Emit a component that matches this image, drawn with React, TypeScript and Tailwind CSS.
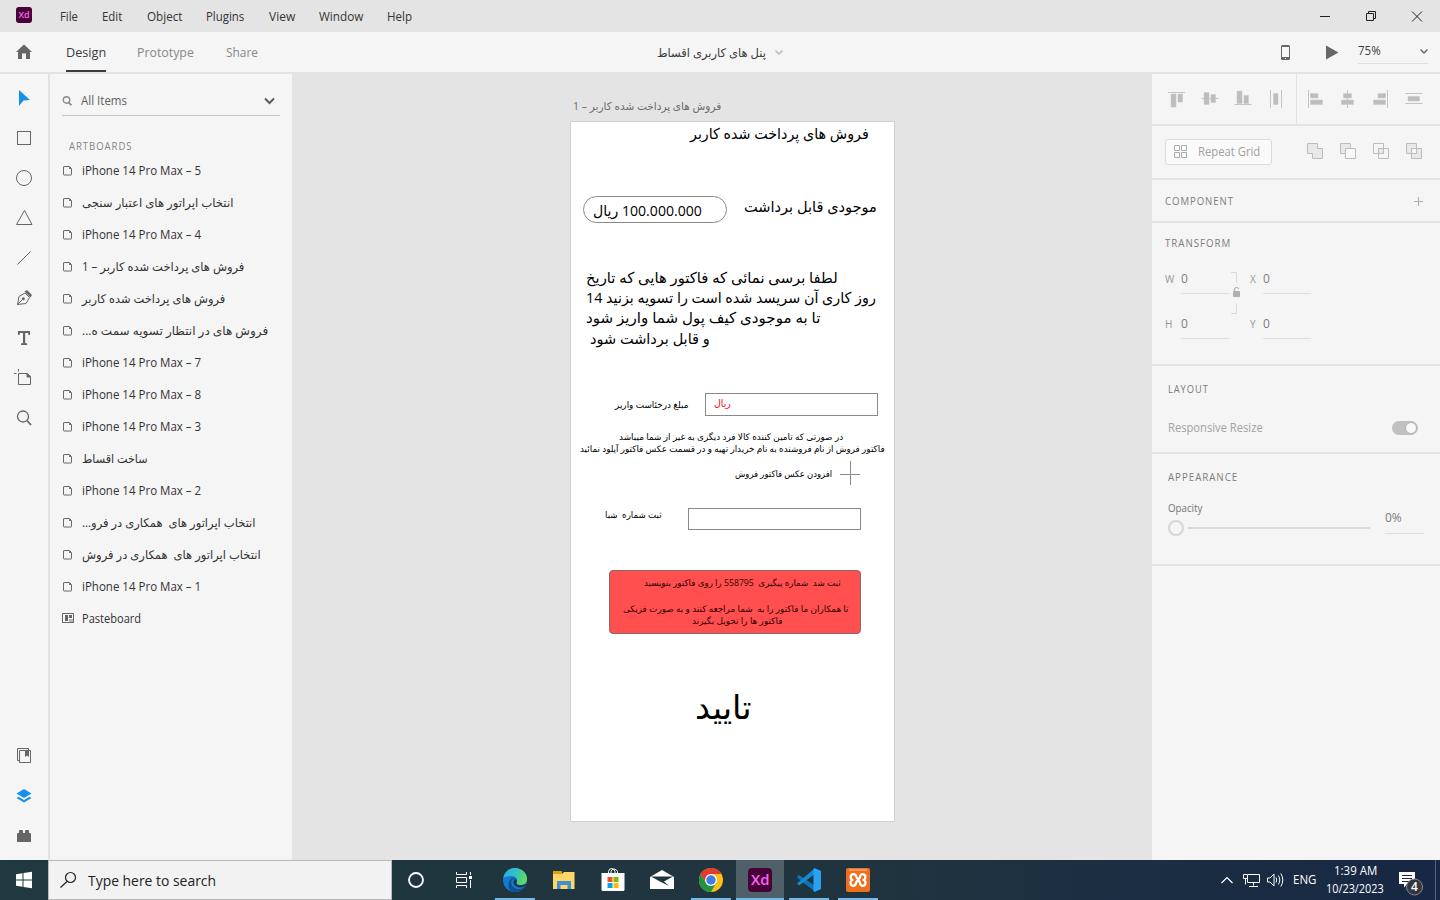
import { useLayoutEffect, useRef } from "react";
import type { ReactNode } from "react";

/* Single line of text stretched to the width of its box. */
function Fit({ className, dir = "ltr", children }: { className: string; dir?: "ltr" | "rtl"; children: ReactNode }) {
  const box = useRef<HTMLDivElement>(null);
  const line = useRef<HTMLSpanElement>(null);
  useLayoutEffect(() => {
    const fit = () => {
      if (!box.current || !line.current) return;
      const natural = line.current.offsetWidth;
      if (natural > 0) line.current.style.transform = `scaleX(${box.current.clientWidth / natural})`;
    };
    fit();
    document.fonts?.ready.then(fit);
  }, []);
  return (
    <div ref={box} className={`shrink-0 whitespace-pre ${className}`}>
      <span ref={line} dir={dir} className="inline-block origin-left">
        {children}
      </span>
    </div>
  );
}

function Svg({ w, h = w, className = "", children }: { w: number; h?: number; className?: string; children: ReactNode }) {
  return (
    <svg width={w} height={h} viewBox={`0 0 ${w} ${h}`} fill="none" className={`shrink-0 ${className}`}>
      {children}
    </svg>
  );
}

const menus = [
  ["File", "w-[18px] ml-[28px]"],
  ["Edit", "w-[20px] ml-[24px]"],
  ["Object", "w-[35px] ml-[25px]"],
  ["Plugins", "w-[38px] ml-[24px]"],
  ["View", "w-[26px] ml-[25px]"],
  ["Window", "w-[44px] ml-[24px]"],
  ["Help", "w-[25px] ml-[24px]"],
];

function TitleBar() {
  return (
    <header className="flex h-8 items-center bg-[#e4e4e4] text-[12px] leading-8 text-[#333]">
      <div className="mb-[2px] ml-4 flex h-4 w-4 items-center justify-center rounded-[3px] bg-[#470137] text-[9px] font-semibold leading-4 text-[#ff61f6]">
        <Fit className="w-[11px]">Xd</Fit>
      </div>
      {menus.map(([name, cls]) => (
        <Fit key={name} className={`${cls} pt-px`}>{name}</Fit>
      ))}
      <Svg w={120} h={32} className="ml-auto">
        <path d="M0 16.5H10" stroke="#222" />
        <path d="M46.500 13.500h7v7h-7zM48.500 13.500v-2h7v7h-2" stroke="#222" />
        <path d="M92 11.500l10 10M102 11.500l-10 10" stroke="#222" />
      </Svg>
    </header>
  );
}

function Toolbar() {
  return (
    <div className="flex h-[42px] items-start border-b-2 border-[#e3e3e3] bg-[#f5f5f5] leading-10 text-[#3c3c3c]">
      <Svg w={48} h={40}>
        <path d="M24 12.500l8 7.500h-2v7h-4v-5.500h-4v5.500h-4v-7h-2z" fill="#666" />
      </Svg>
      <div className="ml-[18px] h-10 border-b-2 border-[#3c3c3c] text-[13px]">
        <Fit className="w-[40px] leading-[41px]">Design</Fit>
      </div>
      <Fit className="ml-[31px] w-[57px] text-[13px] leading-[41px] text-[#888]">Prototype</Fit>
      <Fit className="ml-[32px] w-[32px] text-[13px] leading-[41px] text-[#888]">Share</Fit>
      <Fit dir="rtl" className="ml-[399px] w-[109px] text-[12px] leading-[42px]">پنل های کاربری اقساط</Fit>
      <Svg w={10} h={40} className="ml-2">
        <path d="M1.500 18.500l3.500 3.500 3.500-3.500" stroke="#b9b9b9" strokeWidth="1.500" />
      </Svg>
      <Svg w={60} h={40} className="ml-auto">
        <rect x="1" y="13" width="9" height="15" rx="1.500" fill="#666" />
        <rect x="2" y="15" width="7" height="10" fill="#f8f8f8" />
        <rect x="5" y="26" width="1" height="1" fill="#fff" />
        <path d="M46 13.500l12.500 7-12.500 7z" fill="#666" />
      </Svg>
      <div className="mr-3 ml-[18px] flex h-8 w-[70px] justify-between border-b border-[#dedede]">
        <Fit className="w-[23px] text-[12px] leading-[38px]">75%</Fit>
        <Svg w={8} h={40}>
          <path d="M0.500 17.500l3.500 3.500 3.500-3.500" stroke="#666" strokeWidth="1.500" />
        </Svg>
      </div>
    </div>
  );
}

const tools: ReactNode[] = [
  <path d="M7 4l11 10-6.500.5L7 20z" fill="#1592e6" />,
  <rect x="5.500" y="5.500" width="13" height="13" />,
  <circle cx="12" cy="12" r="7.500" />,
  <path d="M12.500 4.500l7.500 14H4.500z" />,
  <path d="M5.500 18.500L18.500 5.500" />,
  <>
    <path d="M5.500 18.500l1.500-8 6-3.500 4.500 4.500-3.500 6zM5.500 18.500l5-5" />
    <circle cx="11.300" cy="12.700" r="1.500" fill="#666" stroke="none" />
    <path d="M12.500 5.500L15 4l5 5-1.500 2.500z" fill="#666" stroke="none" />
  </>,
  <path d="M6 5h12v4h-1.500l-.5-2h-2.800v10l2 .5V19H9v-1.500l2-.5V7H8l-.5 2H6z" fill="#666" stroke="none" />,
  <>
    <path d="M6.500 7.500h9l3 3v8h-12zM2 7.500h2.500M6.500 3v2.500" />
    <path d="M15 7.500v3.500h3.500z" fill="#666" />
  </>,
  <>
    <circle cx="11" cy="10.500" r="5.500" strokeWidth="1.300" />
    <path d="M15 14.500l4 4.500" strokeWidth="1.800" />
  </>,
];

const panels: ReactNode[] = [
  <>
    <path d="M7.500 16.500h-2v-12h11v2M7.500 6.500h11v12h-11z" />
    <path d="M13 7h4v6l-2-1.500-2 1.500z" fill="#666" stroke="none" />
  </>,
  <path d="M12 5l7.500 4.500-7.500 4.500-7.500-4.500zM4.500 14l2-1.200 5.500 3.200 5.500-3.200 2 1.200L12 18.500z" fill="#1592e6" stroke="none" />,
  <path d="M5 10q0-1 1-1h1V7q0-1 1-1h2q1 0 1 1v2h2V7q0-1 1-1h2q1 0 1 1v2h1q1 0 1 1v8H5z" fill="#666" stroke="none" />,
];

function Rail() {
  return (
    <nav className="flex w-[50px] shrink-0 flex-col justify-between border-r-2 border-[#e3e3e3] py-1">
      {[tools, panels].map((group, g) => (
        <div key={g}>
          {group.map((art, i) => (
            <div key={i} className="flex h-10 items-center justify-center">
              <svg width="24" height="24" viewBox="0 0 24 24" fill="none" stroke={g === 0 && i === 0 ? "none" : "#666"}>
                {art}
              </svg>
            </div>
          ))}
        </div>
      ))}
    </nav>
  );
}

const items: [string, string, "ltr" | "rtl"][] = [
  ["iPhone 14 Pro Max – 5", "w-[119px]", "ltr"],
  ["انتخاب اپراتور های اعتبار سنجی", "w-[151px]", "rtl"],
  ["iPhone 14 Pro Max – 4", "w-[119px]", "ltr"],
  ["فروش های پرداخت شده کاربر – 1", "w-[162px]", "rtl"],
  ["فروش های پرداخت شده کاربر", "w-[143px]", "rtl"],
  ["فروش های در انتظار تسویه سمت ه...", "w-[186px]", "rtl"],
  ["iPhone 14 Pro Max – 7", "w-[119px]", "ltr"],
  ["iPhone 14 Pro Max – 8", "w-[119px]", "ltr"],
  ["iPhone 14 Pro Max – 3", "w-[119px]", "ltr"],
  ["ساخت اقساط", "w-[66px]", "rtl"],
  ["iPhone 14 Pro Max – 2", "w-[119px]", "ltr"],
  ["انتخاب اپراتور های  همکاری در فرو...", "w-[174px]", "rtl"],
  ["انتخاب اپراتور های  همکاری در فروش", "w-[179px]", "rtl"],
  ["iPhone 14 Pro Max – 1", "w-[119px]", "ltr"],
  ["Pasteboard", "w-[59px]", "ltr"],
];

function Layers() {
  return (
    <aside className="w-[242px] shrink-0 pl-3 text-[12px] text-[#333]">
      <div className="mt-3 flex h-[30px] w-[218px] items-center border-b border-[#c4c4c4]">
        <Svg w={10} h={12}>
          <circle cx="4.500" cy="5" r="3.200" stroke="#8b8b8b" strokeWidth="1.400" />
          <path d="M6.800 7.500l2.700 2.800" stroke="#8b8b8b" strokeWidth="1.700" />
        </Svg>
        <Fit className="ml-[9px] w-[46px] leading-[28px] text-[#606060]">All Items</Fit>
        <Svg w={11} h={8} className="mr-[5px] ml-auto">
          <path d="M1 1.500l4.500 4.500L10 1.500" stroke="#5c5c5c" strokeWidth="2" />
        </Svg>
      </div>
      <Fit className="mt-[20px] ml-[7px] w-[63px] pt-px text-[10px] leading-[18px] tracking-[1px] text-[#858585]">ARTBOARDS</Fit>
      {items.map(([name, w, dir], i) => (
        <div key={i} className="flex h-8 items-center">
          {i < items.length - 1 ? (
            <Svg w={12} h={12} className="mb-px">
              <path d="M1.500 2q0-.5.500-.5h5.500l2 2V9.500q0 .5-.5.500h-7q-.5 0-.5-.5z" stroke="#6a6a6a" />
              <path d="M7 1.500V4h2.500z" fill="#6a6a6a" />
            </Svg>
          ) : (
            <Svg w={12} h={12} className="mb-[2px]">
              <rect x=".5" y="1.500" width="11" height="9" stroke="#6a6a6a" />
              <path d="M3 3h3v6H3zM7 3h3v3H7z" fill="#666" />
              <path d="M7 7h4v3H7z" fill="#b5b5b5" />
            </Svg>
          )}
          <Fit dir={dir} className={`ml-2 ${w} leading-8`}>{name}</Fit>
        </div>
      ))}
    </aside>
  );
}

type Label = [string, string, "ltr" | "rtl"];
const labels: Label[] = [
  ["فروش های پرداخت شده کاربر", "left-[119px] top-[-1px] w-[179px] text-[15px] leading-6", "rtl"],
  ["موجودی قابل برداشت", "left-[173px] top-[72px] w-[133px] text-[15px] leading-6", "rtl"],
  ["100.000.000 ریال", "left-[22px] top-[76px] w-[109px] text-[15px] leading-6", "rtl"],
  ["لطفا برسی نمائی که فاکتور هایی که تاریخ", "left-[15px] top-[143px] w-[252px] text-[15px] leading-6", "rtl"],
  ["14 روز کاری آن سریسد شده است را تسویه بزنید", "left-[15px] top-[163px] w-[290px] text-[15px] leading-6", "ltr"],
  ["تا به موجودی کیف پول شما واریز شود", "left-[15px] top-[183px] w-[234px] text-[15px] leading-6", "rtl"],
  ["و قابل برداشت شود", "left-[19px] top-[204px] w-[120px] text-[15px] leading-6", "rtl"],
  ["مبلغ درخئاست واریز", "left-[44px] top-[275px] w-[73px] text-[9px] leading-4", "rtl"],
  ["ریال", "left-[143px] top-[273px] w-[17px] text-[10px] leading-4 text-[#f00]", "rtl"],
  ["در صورتی که تامین کننده کالا فرد دیگری به غیر از شما میباشد", "left-[48px] top-[307px] w-[224px] text-[9px] leading-4", "rtl"],
  ["فاکتور فروش از نام فروشنده به نام خریدار تهیه و در قسمت عکس فاکتور آپلود نمائید", "left-[9px] top-[319px] w-[305px] text-[9px] leading-4", "rtl"],
  ["افزودن عکس فاکتور فروش", "left-[164px] top-[344px] w-[97px] text-[9px] leading-4", "rtl"],
  ["ثبت شماره  شبا", "left-[34px] top-[385px] w-[57px] text-[9px] leading-4", "rtl"],
];

function Canvas() {
  return (
    <main className="flex w-[858px] shrink-0 flex-col bg-[#e4e4e4] pl-[278px]">
      <Fit dir="rtl" className="mt-[19px] mb-[2px] ml-[3px] w-[148px] text-[11px] leading-[26px] text-[#6c6c6c]">فروش های پرداخت شده کاربر – 1</Fit>
      <div className="relative h-[701px] w-[325px] border border-[#d0d0d0] bg-white text-black">
        <div className="absolute top-[74px] left-[12px] h-[27px] w-[144px] rounded-full border border-[#8a8a8a]" />
        <div className="absolute top-[271px] left-[134px] h-[23px] w-[173px] border border-[#8a8a8a]" />
        <div className="absolute top-[386px] left-[117px] h-[22px] w-[173px] border border-[#8a8a8a]" />
        <svg width="22" height="24" viewBox="0 0 22 24" className="absolute top-[339px] left-[269px]">
          <path d="M10.500 0v24M0 13.500h20" stroke="#8a8a8a" fill="none" />
        </svg>
        {labels.map(([text, cls, dir]) => (
          <Fit key={cls} dir={dir} className={`absolute ${cls}`}>{text}</Fit>
        ))}
        <div className="absolute top-[448px] left-[38px] h-[64px] w-[252px] rounded-[4px] border border-[#8a6868] bg-[#ff4f4f] text-[9px] leading-[12px] text-[#300]">
          <Fit dir="rtl" className="mt-[6px] ml-[34px] w-[197px]">ثبت شد  شماره پیگیری  558795 را روی فاکتور بنویسید</Fit>
          <Fit dir="rtl" className="mt-[14px] ml-[13px] w-[226px]">تا همکاران ما فاکتور را به  شما مراجعه کنند و به صورت فزیکی</Fit>
          <Fit dir="rtl" className="ml-[82px] w-[90px]">فاکتور ها را تحویل بگیرند</Fit>
        </div>
        <Fit dir="rtl" className="absolute top-[561px] left-[124px] w-[57px] text-[33px] leading-[48px]">تایید</Fit>
      </div>
    </main>
  );
}

const aligns = [
  "M3 5h17v1H3z|M6 7h5v13H6zM13 7h4.500v8H13z",
  "M3.500 11h17v1h-17z|M6 5.500h5v12H6zM13 7.500h4.500v8H13z",
  "M3.500 17h17v1h-17z|M6 4h5v12.500H6zM13 8.500h4.500v8H13z",
  "M6 3h1v18H6zM17 3h1v18h-1z|M9.500 6.500H14v11H9.500z",
  "M5 3h1v18H5z|M7.500 6.500H15v4.500H7.500zM7.500 13h12v4.500h-12z",
  "M11 3h1v18h-1z|M7.500 6.500h8v4.500h-8zM5.500 13h12v4.500h-12z",
  "M18 3h1v18h-1z|M9 6.500h7.500v4.500H9zM4.500 13h12v4.500h-12z",
  "M3.500 6h17v1h-17zM3.500 16h17v1h-17z|M6 9.500h11.500V14H6z",
];

function AlignIcon({ art }: { art: string }) {
  const [rule, bars] = art.split("|");
  return (
    <Svg w={24}>
      <path d={rule} fill="#c4c4c4" />
      <path d={bars} fill="#bdbdbd" stroke="#c6c6c6" strokeWidth=".5" strokeLinejoin="round" />
    </Svg>
  );
}

function Field({ name, gap, width }: { name: string; gap: string; width: string }) {
  return (
    <div className="flex h-[30px] items-start">
      <Fit className={`${width} text-[10px] leading-[30px] text-[#959595]`}>{name}</Fit>
      <div className={`${gap} h-[30px] w-12 border-b border-[#dedede] text-[12px] leading-[29px] text-[#7c7c7c]`}>
        <Fit className="w-[7px]">0</Fit>
      </div>
    </div>
  );
}

const heading = "text-[10px] tracking-[1px] text-[#7c7c7c]";

function Inspector() {
  return (
    <aside className="w-[290px] shrink-0 border-l-2 border-[#e3e3e3]">
      <div className="flex h-[52px] border-b-2 border-[#e3e3e3]">
        <div className="flex w-[145px] items-center gap-[9px] border-r border-[#e3e3e3] pl-[13px]">
          {aligns.slice(0, 4).map((a) => <AlignIcon key={a} art={a} />)}
        </div>
        <div className="flex items-center gap-[9px] pl-[6px]">
          {aligns.slice(4).map((a) => <AlignIcon key={a} art={a} />)}
        </div>
      </div>
      <div className="flex h-[54px] items-center border-b-2 border-[#e3e3e3] pl-[13px]">
        <div className="flex h-[26px] w-[107px] items-center rounded-[3px] border border-[#dcdcdc] bg-[#fafafa] pl-2">
          <Svg w={14} className="mb-px">
            <path d="M.5.500h5v5h-5zM7.500.500h5v5h-5zM.5 7.500h5v5h-5zM7.500 7.500h5v5h-5z" stroke="#aaa" />
          </Svg>
          <Fit className="ml-[10px] w-[62px] text-[12px] leading-6 text-[#a0a0a0]">Repeat Grid</Fit>
        </div>
        <Svg w={120} h={18} className="mb-[2px] ml-[34px]">
          <g stroke="#bcbcbc" fill="#e8e8e8" strokeLinejoin="round">
            <path d="M1.500 1.500h10v5h5v10h-10v-5h-5z" />
            <path d="M34.500 1.500h10v5h-5v5h-5z" />
            <path d="M39.500 6.500h10v10h-10z" fill="#f8f8f8" />
            <path d="M67.500 1.500h10v10h-10zM72.500 6.500h10v10h-10z" fill="none" />
            <path d="M72.500 6.500h5v5h-5z" />
            <path d="M100.500 1.500h10v10h-10zM105.500 6.500h10v10h-10z" />
            <path d="M105.500 6.500h5v5h-5z" fill="#f8f8f8" />
          </g>
        </Svg>
      </div>
      <div className="flex h-[43px] items-center border-b-2 border-[#e3e3e3] pl-[13px]">
        <Fit className={`w-[69px] leading-5 ${heading}`}>COMPONENT</Fit>
        <Svg w={10} className="mr-[17px] ml-auto">
          <path d="M5.500 1v9M1 5.500h9" stroke="#b0b0b0" strokeWidth="1.100" />
        </Svg>
      </div>
      <div className="h-[143px] border-b-2 border-[#e3e3e3] pt-[10px] pl-[13px]">
        <Fit className={`w-[66px] leading-5 ${heading}`}>TRANSFORM</Fit>
        <div className="mt-[11px] flex">
          <div className="flex flex-col gap-[15px]">
            <Field name="W" width="w-[9px]" gap="ml-[7px]" />
            <Field name="H" width="w-[7px]" gap="ml-[9px]" />
          </div>
          <Svg w={12} h={60}>
            <path d="M2 8.500h5.500v10M2 49.500h5.500v-10" stroke="#d9d9d9" />
            <rect x="4" y="27" width="7" height="6" rx="1" fill="#b0b0b0" />
            <path d="M5.500 27v-1.500q0-2 2-2t2 1.500" stroke="#b0b0b0" strokeWidth="1.200" />
          </Svg>
          <div className="ml-[9px] flex flex-col gap-[15px]">
            <Field name="X" width="w-[6px]" gap="ml-[7px]" />
            <Field name="Y" width="w-[6px]" gap="ml-[7px]" />
          </div>
        </div>
      </div>
      <div className="h-[88px] border-b-2 border-[#e3e3e3] pt-[13px] pl-4">
        <Fit className={`w-[41px] leading-5 ${heading}`}>LAYOUT</Fit>
        <div className="mt-[19px] flex h-5 items-center justify-between pr-[22px]">
          <Fit className="w-[95px] text-[12px] leading-[22px] text-[#a2a2a2]">Responsive Resize</Fit>
          <div className="flex h-[14px] w-[26px] items-center justify-end rounded-full bg-[#c1c1c1] pr-px">
            <div className="h-[12px] w-[12px] rounded-full border border-[#b3b3b3] bg-[#f8f8f8]" />
          </div>
        </div>
      </div>
      <div className="h-[112px] border-b-2 border-[#e3e3e3] pt-[13px] pl-4">
        <Fit className={`w-[70px] leading-5 ${heading}`}>APPEARANCE</Fit>
        <div className="mt-[11px] flex">
          <div className="w-[202px]">
            <Fit className="w-[34px] text-[10px] leading-5 text-[#747474]">Opacity</Fit>
            <div className="mt-[2px] flex items-center">
              <div className="h-4 w-4 rounded-full border-2 border-[#d6d6d6]" />
              <div className="ml-1 h-[2px] w-[182px] bg-[#d9d9d9]" />
            </div>
          </div>
          <div className="mt-[5px] ml-[15px] h-[31px] w-[39px] border-b border-[#dedede] text-[12px] leading-[30px] text-[#7c7c7c]">
            <Fit className="w-[17px]">0%</Fit>
          </div>
        </div>
      </div>
    </aside>
  );
}

const apps: { active?: boolean; bar?: string; art: ReactNode }[] = [
  {
    bar: "w-10",
    art: (
      <>
        <defs>
          <linearGradient id="edgeTop" x1="0" y1="0" x2="24" y2="8" gradientUnits="userSpaceOnUse">
            <stop stopColor="#2aa9e8" /><stop offset=".55" stopColor="#34c1c8" /><stop offset="1" stopColor="#62dc57" />
          </linearGradient>
        </defs>
        <circle cx="12" cy="12" r="12" fill="#1579cf" />
        <path d="M.3 10C2 2.500 7 0 12 0c7 0 12 5 12 11 0 4-3 6-6.500 6-3 0-4.500-1.200-4-2.500 2-3-1-6.500-5-6.500C5 8 2 9 .3 10z" fill="url(#edgeTop)" />
        <path d="M8.500 12.500c-1.500 5 3 9 8 8.500 2.500-.2 4-1 5.500-2-3 5-8.500 6-13 4.500-4-2-5-9-.5-13 2-1.500 5 0 5.300 2-2-2-4.500-1.500-5.300 0z" fill="#0c4f93" />
        <path d="M13.500 14.500c-.7 1.500 1 2.700 4 2.700 2 0 3.500-.6 4.500-1.200l1.500 1C20 21 12 20 10.500 15c-.6-2 1-3.500 2.500-3.500 1 .7 1 2 .5 3z" fill="#20363f" />
      </>
    ),
  },
  {
    art: (
      <>
        <path d="M1 5.500h9.500L12 4h10.500v17H1z" fill="#ffd766" />
        <path d="M5 13h14v8h-3.500v-4h-7v4H5z" fill="#3d8fd6" />
        <path d="M1 3h9v3H1z" fill="#dd9f0c" />
      </>
    ),
  },
  {
    art: (
      <>
        <path d="M7.500 5V3.500Q8 .5 10.500.500t3.500 3V5M10 5V3.500Q10.500 1 13 1t3.500 2.500V5" stroke="#fff" />
        <path d="M.5 5h23v16.500q0 1.500-1.500 1.500H2Q.5 23 .5 21.500z" fill="#fff" />
        <path d="M6.500 9h5v5h-5z" fill="#f25022" /><path d="M12.500 9h5v5h-5z" fill="#7fba00" />
        <path d="M6.500 15h5v5h-5z" fill="#00a4ef" /><path d="M12.500 15h5v5h-5z" fill="#ffb900" />
      </>
    ),
  },
  {
    art: (
      <>
        <path d="M0 9L12 2l12 7v12H0z" fill="#fff" />
        <path d="M1 8.500h22L14 13.500l5 4.500L9 13z" fill="#20363f" />
      </>
    ),
  },
  {
    bar: "w-10",
    art: (
      <>
        <circle cx="12" cy="12" r="12" fill="#fbc116" />
        <path d="M1.600 6A12 12 0 0 1 22.400 6H12z" fill="#e33b2e" />
        <path d="M1.600 6L6.800 15 12 6.500V3z" fill="#e33b2e" />
        <path d="M1.600 6L6.800 15 12 17.500 17.200 15 12 24A12 12 0 0 1 1.600 6z" fill="#229342" />
        <circle cx="12" cy="12" r="6" fill="#fff" /><circle cx="12" cy="12" r="4.700" fill="#3f7de8" />
      </>
    ),
  },
  {
    active: true,
    bar: "w-12",
    art: <rect width="24" height="24" rx="4" fill="#470137" />,
  },
  {
    bar: "w-10",
    art: (
      <>
        <path d="M0 8.500L2 7l16.500 11V24L.5 10z" fill="#0d74b9" />
        <path d="M0 15.500L18 0v6L2 17.500z" fill="#1689cf" />
        <path d="M17.500 0L24 3v18l-6.500 3-1-1.500V1.500z" fill="#29a3f1" />
      </>
    ),
  },
  {
    bar: "w-10",
    art: (
      <>
        <rect width="24" height="24" rx="2" fill="#ee6f20" />
        <path d="M3 2h18" stroke="#f7b78a" strokeWidth="1.200" />
        <path
          d="M10.500 9.500Q10 6 7 6.200Q4 7 4.800 10Q5 11.500 6.500 12Q4.500 12.500 4.500 15Q4.800 18 7.500 17.800Q10 17.500 10 14.500L14 9.500Q14 6 17 6.200Q20 7 19.200 10Q19 11.500 17.500 12Q19.500 12.500 19.500 15Q19.200 18 16.500 17.800Q14 17.500 13.800 14.500Q13.500 12 10.500 9.500"
          stroke="#fff"
          strokeWidth="2.300"
          strokeLinejoin="round"
        />
      </>
    ),
  },
];

function Taskbar() {
  return (
    <footer className="flex h-10 items-center bg-linear-to-r from-[#20383f] via-[#20343f] via-60% to-[#172744] text-white">
      <Svg w={48} h={40}>
        <path d="M16 14.200l6.500-1v6.300H16zM23.500 13l8.500-1.300v7.800h-8.500zM16 20.500h6.500v6.300l-6.500-1zM23.500 20.500H32v7.800L23.500 27z" fill="#fff" />
      </Svg>
      <div className="flex h-10 w-[344px] items-center border border-[#b9b9b9] bg-[#f2f2f2]">
        <Svg w={18} className="ml-[10px]">
          <circle cx="11.500" cy="6.500" r="5" stroke="#222" strokeWidth="1.200" />
          <path d="M8 10.500L1.500 16.500" stroke="#222" strokeWidth="1.200" />
        </Svg>
        <Fit className="ml-[11px] w-[128px] text-[15px] leading-10 text-[#222]">Type here to search</Fit>
      </div>
      <Svg w={99} h={40}>
        <circle cx="24" cy="20" r="7" stroke="#fff" strokeWidth="1.800" />
        <path d="M64.500 12v2.500h10V12M64.500 28v-2.500h10V28M64.500 17.500h10v5h-10z" stroke="#fff" />
        <path d="M78.500 12v3M78.500 20v8" stroke="#fff" />
        <rect x="77" y="16" width="3" height="3" fill="#fff" />
      </Svg>
      {apps.map((app, i) => (
        <div key={i} className={`relative mr-px flex h-10 w-12 items-center justify-center ${app.active ? "bg-[#4f6069]" : ""}`}>
          <Svg w={24}>{app.art}</Svg>
          {app.active && <Fit className="absolute top-[10px] left-[15px] w-[18px] text-[14px] leading-5 font-semibold text-[#ff61f6]">Xd</Fit>}
          {app.bar && <div className={`absolute bottom-0 h-[2px] bg-[#76b9ed] ${app.bar}`} />}
        </div>
      ))}
      <Svg w={68} h={40} className="ml-auto">
        <path d="M5.500 23l5.500-5.500 5.500 5.500" stroke="#fff" strokeWidth="1.200" />
        <path d="M32 14.500h11.500v8H31.500v-4M37.500 22.500v3M33 26.500h9M27.500 14.500h4v4h-4zM29.500 18.500v6" stroke="#fff" />
        <path d="M51.500 18h2.500l4-4v12l-4-4h-2.500z" stroke="#fff" />
        <path d="M60 17.500q1.500 2.500 0 5M62.300 15.500q3 4.500 0 9M64.800 13.500q4 6.500 0 13" stroke="#fff" />
      </Svg>
      <Fit className="ml-[9px] w-[23px] text-[12px] leading-10">ENG</Fit>
      <div className="ml-[10px] flex flex-col items-center text-[12px] leading-[18px]">
        <Fit className="w-[43px]">1:39 AM</Fit>
        <Fit className="w-[58px]">10/23/2023</Fit>
      </div>
      <div className="relative ml-[14px] h-10 w-[37px]">
        <Svg w={37} h={40}>
          <path d="M1 12h16v12h-8l-3 3.500V24H1z" fill="#fff" />
          <path d="M4 15.500h10M4 18.500h10M4 21.500h7" stroke="#172744" />
          <circle cx="16.500" cy="27" r="8" fill="#33363c" stroke="#858b94" />
        </Svg>
        <Fit className="absolute top-[18px] left-[13px] w-[7px] text-[12px] leading-[18px] font-semibold">4</Fit>
      </div>
      <div className="mr-1 h-10 w-px bg-[#59647a]" />
    </footer>
  );
}

export default function App() {
  return (
    <div className="flex h-[900px] w-[1440px] flex-col overflow-hidden bg-[#f5f5f5] font-['Open_Sans','DejaVu_Sans',sans-serif]">
      <TitleBar />
      <Toolbar />
      <div className="flex h-[786px]">
        <Rail />
        <Layers />
        <Canvas />
        <Inspector />
      </div>
      <Taskbar />
    </div>
  );
}
